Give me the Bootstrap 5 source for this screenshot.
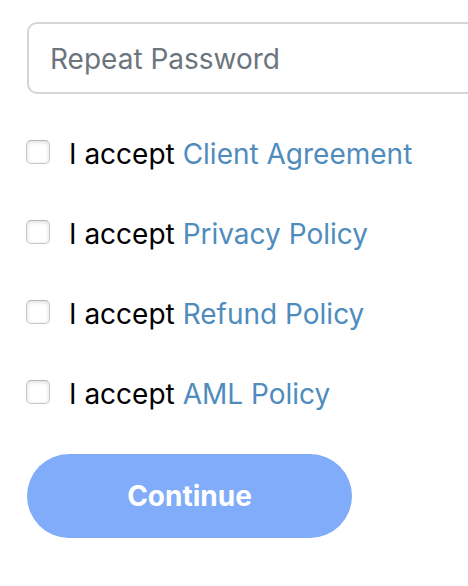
<!DOCTYPE html>
<html lang="en">
<head>
  <meta charset="UTF-8" />
  <meta name="viewport" content="width=device-width, initial-scale=1" />
  <title>Sign up</title>
  <link href="https://cdn.jsdelivr.net/npm/bootstrap@5.3.0/dist/css/bootstrap.min.css" rel="stylesheet" />
  <style>
    body {
      font-family: Inter, "Liberation Sans", sans-serif;
      font-size: 28px;
      line-height: 40px;
      color: #000;
      background: #fff;
    }
    .signup-form {
      padding: 22px 0 48px 27px;
      overflow: hidden;
    }
    /* the field runs past the right edge of the window */
    .field-wrap {
      margin-right: -24px;
      margin-bottom: 40px;
    }
    .field-wrap .form-control {
      height: 72px;
      padding: 2px 21px 0;
      font-size: 28px;
      line-height: 40px;
      border: 2px solid #d5d5d5;
      border-radius: 10px;
    }
    .field-wrap .form-control::placeholder {
      color: #6c757d;
    }
    .agree-list {
      gap: 40px;
      margin-bottom: 40px;
    }
    .agree-row {
      gap: 19px;
    }
    .agree-row .form-check-input {
      width: 24px;
      height: 24px;
      margin: 0 0 4px -1px;
      border: 1px solid #c6c6c6;
      border-top-color: #b4b4b4;
      border-radius: 5px;
    }
    .agree-row .form-check-input:not(:checked) {
      box-shadow: inset 0 1px 4px rgba(0, 0, 0, 0.15);
    }
    .agree-row a {
      color: #4f8cbd;
      text-decoration: none;
    }
    .btn-continue {
      width: 325px;
      height: 84px;
      font-size: 28px;
      font-weight: 700;
      color: #fff;
      background: #80acfa;
      border: 0;
      border-radius: 42px;
    }
  </style>
</head>
<body>

  <form class="signup-form">
    <div class="field-wrap">
      <input type="password" class="form-control" name="repeat_password" placeholder="Repeat Password" aria-label="Repeat Password" />
    </div>

    <div class="agree-list d-flex flex-column">
      <div class="agree-row d-flex align-items-center">
        <input class="form-check-input" type="checkbox" id="acceptClient" />
        <label for="acceptClient">I accept <a href="#">Client Agreement</a></label>
      </div>
      <div class="agree-row d-flex align-items-center">
        <input class="form-check-input" type="checkbox" id="acceptPrivacy" />
        <label for="acceptPrivacy">I accept <a href="#">Privacy Policy</a></label>
      </div>
      <div class="agree-row d-flex align-items-center">
        <input class="form-check-input" type="checkbox" id="acceptRefund" />
        <label for="acceptRefund">I accept <a href="#">Refund Policy</a></label>
      </div>
      <div class="agree-row d-flex align-items-center">
        <input class="form-check-input" type="checkbox" id="acceptAml" />
        <label for="acceptAml">I accept <a href="#">AML Policy</a></label>
      </div>
    </div>

    <button type="submit" class="btn btn-continue">Continue</button>
  </form>

  <script src="https://cdn.jsdelivr.net/npm/bootstrap@5.3.0/dist/js/bootstrap.bundle.min.js"></script>
</body>
</html>
